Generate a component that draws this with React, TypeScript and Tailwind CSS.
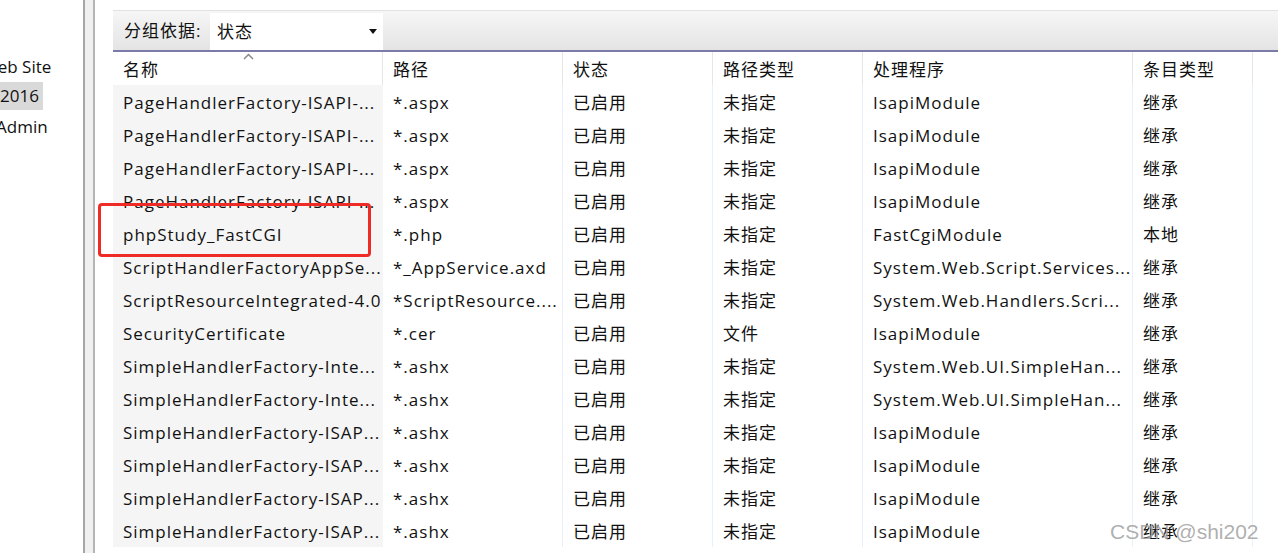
import React from "react";

interface HandlerRow {
  name: string;
  path: string;
  state: string;
  pathType: string;
  handler: string;
  entryType: string;
}

const rows: HandlerRow[] = [
  { name: "PageHandlerFactory-ISAPI-...", path: "*.aspx", state: "已启用", pathType: "未指定", handler: "IsapiModule", entryType: "继承" },
  { name: "PageHandlerFactory-ISAPI-...", path: "*.aspx", state: "已启用", pathType: "未指定", handler: "IsapiModule", entryType: "继承" },
  { name: "PageHandlerFactory-ISAPI-...", path: "*.aspx", state: "已启用", pathType: "未指定", handler: "IsapiModule", entryType: "继承" },
  { name: "PageHandlerFactory-ISAPI-...", path: "*.aspx", state: "已启用", pathType: "未指定", handler: "IsapiModule", entryType: "继承" },
  { name: "phpStudy_FastCGI", path: "*.php", state: "已启用", pathType: "未指定", handler: "FastCgiModule", entryType: "本地" },
  { name: "ScriptHandlerFactoryAppSe...", path: "*_AppService.axd", state: "已启用", pathType: "未指定", handler: "System.Web.Script.Services...", entryType: "继承" },
  { name: "ScriptResourceIntegrated-4.0", path: "*ScriptResource....", state: "已启用", pathType: "未指定", handler: "System.Web.Handlers.Scri...", entryType: "继承" },
  { name: "SecurityCertificate", path: "*.cer", state: "已启用", pathType: "文件", handler: "IsapiModule", entryType: "继承" },
  { name: "SimpleHandlerFactory-Inte...", path: "*.ashx", state: "已启用", pathType: "未指定", handler: "System.Web.UI.SimpleHan...", entryType: "继承" },
  { name: "SimpleHandlerFactory-Inte...", path: "*.ashx", state: "已启用", pathType: "未指定", handler: "System.Web.UI.SimpleHan...", entryType: "继承" },
  { name: "SimpleHandlerFactory-ISAP...", path: "*.ashx", state: "已启用", pathType: "未指定", handler: "IsapiModule", entryType: "继承" },
  { name: "SimpleHandlerFactory-ISAP...", path: "*.ashx", state: "已启用", pathType: "未指定", handler: "IsapiModule", entryType: "继承" },
  { name: "SimpleHandlerFactory-ISAP...", path: "*.ashx", state: "已启用", pathType: "未指定", handler: "IsapiModule", entryType: "继承" },
  { name: "SimpleHandlerFactory-ISAP...", path: "*.ashx", state: "已启用", pathType: "未指定", handler: "IsapiModule", entryType: "继承" },
];

const cell = "h-[33px] flex items-center pl-[10px] pt-[2px] whitespace-nowrap overflow-hidden";

const App = () => {
  return (
    <div
      className="w-[1278px] h-[553px] flex bg-white overflow-hidden text-[17px] text-[#111]"
      style={{ fontFamily: '"Open Sans", "Noto Sans CJK SC", sans-serif' }}
    >
      {/* tree pane, mostly scrolled off */}
      <div className="w-[83px] shrink-0 overflow-hidden pt-[52px] leading-[30px]">
        <div className="ml-[-18px] whitespace-nowrap">Web Site</div>
        <div className="h-[28px] w-[43px] bg-[#d9d9d9] flex items-center whitespace-nowrap">2016</div>
        <div className="ml-[-4px] whitespace-nowrap mt-[2px]">Admin</div>
      </div>

      {/* splitter */}
      <div className="w-[2px] shrink-0 bg-[#a6a6a6]" />
      <div className="w-[8px] shrink-0 bg-[#f0f0f0]" />
      <div className="w-[2px] shrink-0 bg-[#b4b4b4]" />
      <div className="w-[18px] shrink-0" />

      {/* handler mappings list */}
      <div className="flex-1 pt-[10px] relative tracking-[1px]">
        <div className="h-[42px] flex border-t border-[#e1e1e1] border-b-2 border-b-[#7c7aa9] bg-gradient-to-b from-[#f6f6f6] to-[#e4e4e4]">
          <div className="w-[97px] flex items-center pl-[11px]">分组依据:</div>
          <div className="w-[173px] bg-white flex items-center justify-between pl-[7px] pr-[6px] mt-[2px]">
            <span>状态</span>
            <svg width="8" height="5" viewBox="0 0 8 5">
              <path d="M0 0 H8 L4 5 Z" fill="#111" />
            </svg>
          </div>
        </div>

        <div className="flex">
          <div className="w-[270px] relative">
            <div className={`${cell} border-r border-[#e6e6e6]`}>名称</div>
            <svg className="absolute left-[130px] top-[1px]" width="11" height="7" viewBox="0 0 11 7">
              <path d="M1 6 L5.5 1.5 L10 6" stroke="#8a8a8a" strokeWidth="1.5" fill="none" />
            </svg>
          </div>
          <div className={`${cell} w-[180px] border-r border-[#e6e6e6]`}>路径</div>
          <div className={`${cell} w-[150px] border-r border-[#e6e6e6]`}>状态</div>
          <div className={`${cell} w-[150px] border-r border-[#e6e6e6]`}>路径类型</div>
          <div className={`${cell} w-[270px] border-r border-[#e6e6e6]`}>处理程序</div>
          <div className={`${cell} w-[120px] border-r border-[#e6e6e6]`}>条目类型</div>
        </div>

        {rows.map((r, i) => (
          <div key={i} className="flex">
            <div className={`${cell} w-[270px] bg-[#f5f5f5]`}>{r.name}</div>
            <div className={`${cell} w-[180px] border-r border-[#e8f1fb]`}>{r.path}</div>
            <div className={`${cell} w-[150px] border-r border-[#e8f1fb]`}>{r.state}</div>
            <div className={`${cell} w-[150px] border-r border-[#e8f1fb]`}>{r.pathType}</div>
            <div className={`${cell} w-[270px] border-r border-[#e8f1fb]`}>{r.handler}</div>
            <div className={`${cell} w-[120px] border-r border-[#e8f1fb]`}>{r.entryType}</div>
          </div>
        ))}
      </div>

      {/* annotation */}
      <div className="absolute left-[98px] top-[203px] w-[273px] h-[54px] border-[3px] border-[#ee2b24] rounded-[4px]" />

      <div
        className="absolute left-[1110px] top-[516px] text-[21px] text-[#9a9a9a]/80 whitespace-nowrap"
        style={{ fontFamily: '"Liberation Sans", Arial, sans-serif' }}
      >
        CSDN @shi202
      </div>
    </div>
  );
};

export default App;
